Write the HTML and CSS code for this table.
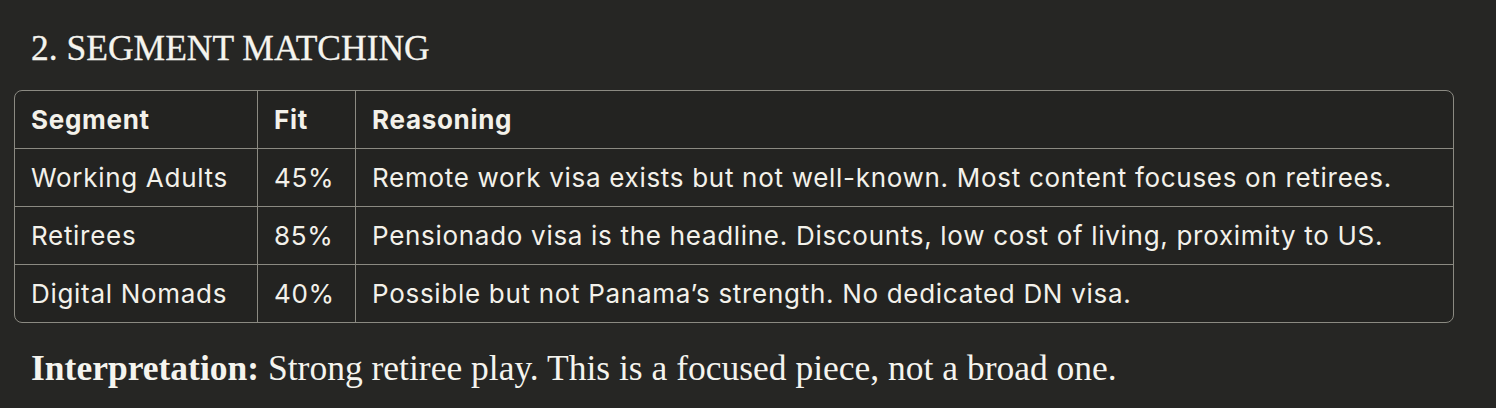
FILE: index.html
```html
<!DOCTYPE html>
<html>
<head>
<meta charset="utf-8">
<link rel="stylesheet" href="styles.css">
</head>
<body>
<div class="page">
  <h2 class="title">2. SEGMENT MATCHING</h2>
  <div class="table-wrap">
    <table class="seg">
      <thead>
        <tr><th class="c1">Segment</th><th class="c2">Fit</th><th class="c3">Reasoning</th></tr>
      </thead>
      <tbody>
        <tr><td>Working Adults</td><td>45%</td><td>Remote work visa exists but not well-known. Most content focuses on retirees.</td></tr>
        <tr><td>Retirees</td><td>85%</td><td>Pensionado visa is the headline. Discounts, low cost of living, proximity to US.</td></tr>
        <tr><td>Digital Nomads</td><td>40%</td><td>Possible but not Panama’s strength. No dedicated DN visa.</td></tr>
      </tbody>
    </table>
  </div>
  <p class="interp"><strong>Interpretation:</strong> Strong retiree play. This is a focused piece, not a broad one.</p>
</div>
</body>
</html>
```
FILE: styles.css
```css
html, body {
  margin: 0;
  padding: 0;
  background: #262624;
}
.page {
  padding: 28px 0 0 14px;
  width: 1440px;
}
.title {
  margin: 0 0 0 17px;
  font-family: "Liberation Serif", serif;
  font-weight: 400;
  font-size: 35.5px;
  line-height: 40px;
  color: #f5f4ee;
  -webkit-text-stroke: 0.3px #f5f4ee;
}
.table-wrap {
  margin-top: 22px;
  border: 1px solid #8b8a82;
  border-radius: 8px;
  overflow: hidden;
  background: #232321;
}
.seg {
  width: 100%;
  border-collapse: collapse;
  font-family: Inter, "Noto Sans", sans-serif;
  font-size: 26px;
  letter-spacing: 0.7px;
  color: #f3f1ea;
}
.seg th, .seg td {
  height: 57px;
  padding: 0 16px;
  text-align: left;
  vertical-align: middle;
  border-right: 1px solid #8b8a82;
  border-bottom: 1px solid #8b8a82;
  white-space: nowrap;
}
.seg th {
  font-weight: 700;
}
.seg td {
  font-weight: 400;
}
.seg tr > :last-child { border-right: none; }
.seg tbody tr:last-child td { border-bottom: none; }
.c1 { width: 210px; }
.c2 { width: 65px; }
.interp {
  margin: 25px 0 0 17px;
  font-family: "Liberation Serif", serif;
  font-size: 35.5px;
  line-height: 40px;
  color: #f5f4ee;
}
.interp strong { font-weight: 700; }
```
